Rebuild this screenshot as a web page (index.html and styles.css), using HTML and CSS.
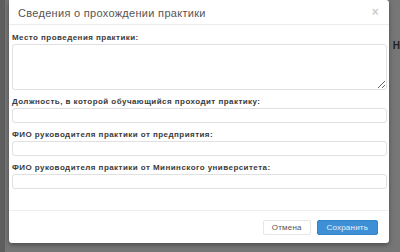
FILE: index.html
```html
<!DOCTYPE html>
<html lang="ru">
<head>
	<meta charset="UTF-8" />
	<title>Сведения о прохождении практики</title>
	<link rel="stylesheet" href="styles.css">
</head>
<body>
	<div class="page-edge"></div>
	<!-- modal dialog -->
	<div class="modal">
		<div class="modal-header">
			<span class="modal-title">Сведения о прохождении практики</span>
			<span class="close">×</span>
		</div>
		<div class="modal-body">
			<label class="field-label">Место проведения практики:</label>
			<textarea class="field field-area"></textarea>

			<label class="field-label">Должность, в которой обучающийся проходит практику:</label>
			<input class="field" type="text">

			<label class="field-label">ФИО руководителя практики от предприятия:</label>
			<input class="field" type="text">

			<label class="field-label">ФИО руководителя практики от Мининского университета:</label>
			<input class="field" type="text">
		</div>
		<div class="modal-footer">
			<button class="btn btn-default" type="button">Отмена</button>
			<button class="btn btn-primary" type="button">Сохранить</button>
		</div>
	</div>
	<div class="page-side">Н</div>
</body>
</html>
```

FILE: styles.css
```css
html,
body {
	margin: 0;
	height: 100%;
}

body {
	display: flex;
	align-items: flex-start;
	background-color: #767676;
	font-family: "Liberation Sans", Arial, Helvetica, sans-serif;
	color: #333;
}

.page-edge {
	width: 5px;
	height: 100%;
	background-color: #5e5e5e;
}

.modal {
	margin-left: 4px;
	width: 381px;
	height: 243px;
	background-color: #fff;
	border-radius: 0 3px 3px 3px;
	box-shadow: 0 2px 5px rgba(0, 0, 0, 0.35);
	display: flex;
	flex-direction: column;
}

.modal-header {
	height: 25px;
	border-bottom: 1px solid #ececec;
	display: flex;
	align-items: center;
	padding: 0 10px 0 9px;
	box-sizing: border-box;
}

.modal-title {
	flex: 1;
	font-size: 11px;
	letter-spacing: 0.3px;
	color: #555;
	padding-top: 2px;
}

.close {
	font-size: 12px;
	color: #cccccc;
	font-weight: bold;
}

.modal-body {
	flex: 1;
	padding: 7px 2px 0 3px;
	display: flex;
	flex-direction: column;
}

.field-label {
	font-size: 8px;
	font-weight: bold;
	letter-spacing: 0.45px;
	line-height: 12px;
	color: #3a3a3a;
}

.field {
	display: block;
	box-sizing: border-box;
	width: 100%;
	height: 15px;
	margin: 0 0 6px 0;
	border: 1px solid #e0e0e0;
	border-radius: 3px;
	background-color: #fff;
	padding: 0;
}

.field-area {
	height: 46px;
	resize: vertical;
}

.modal-footer {
	border-top: 1px solid #eeeeee;
	height: 33px;
	box-sizing: border-box;
	display: flex;
	justify-content: flex-end;
	align-items: flex-start;
	padding: 9px 11px 0 0;
	gap: 6px;
}

.btn {
	font-family: "Liberation Sans", Arial, Helvetica, sans-serif;
	font-size: 8px;
	letter-spacing: 0.2px;
	height: 15px;
	border-radius: 2px;
	padding: 0;
	cursor: pointer;
}

.btn-default {
	width: 48px;
	background-color: #fff;
	border: 1px solid #e6e6e6;
	color: #555;
}

.btn-primary {
	width: 61px;
	background-color: #3d8fd6;
	border: 1px solid #3584c8;
	color: #eaf3fb;
}

.page-side {
	margin: 40px 0 0 4px;
	font-size: 10px;
	font-weight: bold;
	color: #222;
}
```
